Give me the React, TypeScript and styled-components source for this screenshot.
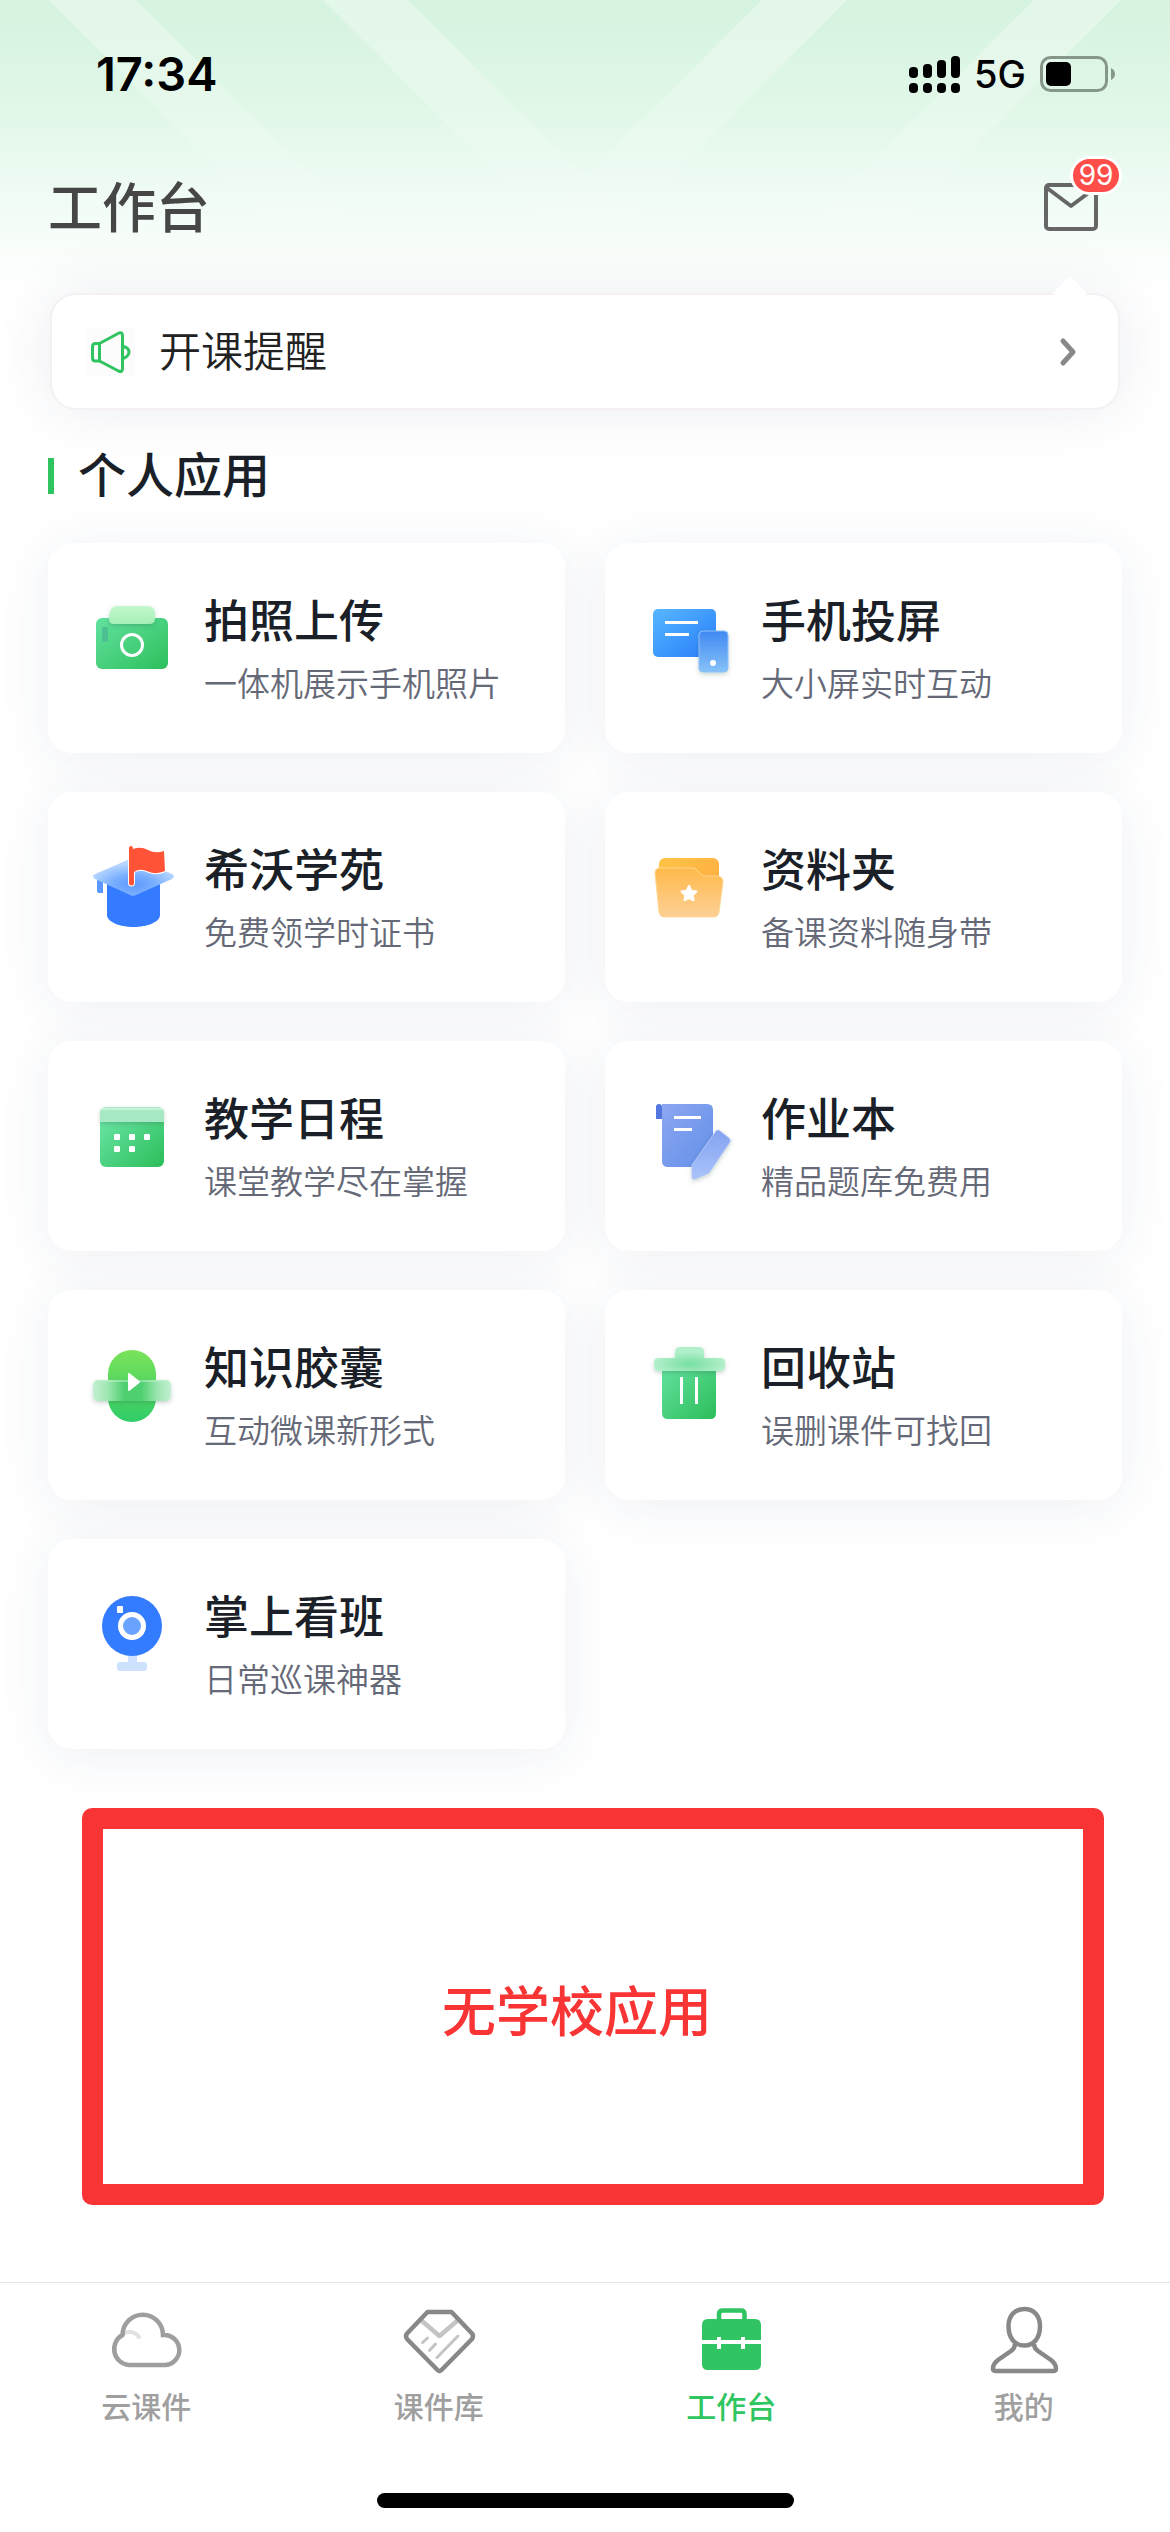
import React from "react";
import styled, { createGlobalStyle } from "styled-components";

const GlobalStyle = createGlobalStyle`
  *, *::before, *::after { box-sizing: border-box; }
  body {
    margin: 0;
    background: #fff;
    font-family: Inter, "Noto Sans CJK SC", sans-serif;
  }
  button {
    font: inherit;
    color: inherit;
    border: 0;
    padding: 0;
    background: none;
    text-align: left;
    cursor: pointer;
  }
  a { color: inherit; text-decoration: none; }
  h1, h2, p { margin: 0; }
  svg { display: block; overflow: visible; flex: none; }
`;

const Screen = styled.div`
  position: relative;
  display: flex;
  flex-direction: column;
  min-height: 100vh;
  background: linear-gradient(#d5f3df 0, #e1f7e8 110px, #f2fcf6 210px, #fff 290px);
`;

const Rays = styled.svg`
  position: absolute;
  top: 0;
  left: 0;
  width: 100%;
  height: 290px;
`;

const StatusBar = styled.div`
  position: relative;
  display: flex;
  align-items: center;
  justify-content: space-between;
  height: 148px;
  padding: 0 54px 0 96px;
  color: #000;
`;

const Clock = styled.span`
  font-size: 47px;
  line-height: 60px;
  font-weight: 600;
`;

const StatusIcons = styled.div`
  display: flex;
  align-items: center;
  gap: 14px;
`;

const Network = styled.span`
  font-size: 38px;
  line-height: 48px;
  font-weight: 500;
`;

const Header = styled.header`
  position: relative;
  display: flex;
  align-items: center;
  justify-content: space-between;
  height: 118px;
  padding: 0 72px 0 48px;
`;

const PageTitle = styled.h1`
  padding-top: 4px;
  font-size: 54px;
  line-height: 72px;
  font-weight: 500;
  color: #464646;
`;

const MailButton = styled.button`
  position: relative;
`;

const Badge = styled.span`
  position: absolute;
  top: -27px;
  left: 26px;
  display: flex;
  align-items: center;
  justify-content: center;
  width: 52px;
  height: 39px;
  border: 3px solid #fff;
  border-radius: 20px;
  background: #ff4d49;
  color: #fff;
  font-size: 28px;
  line-height: 33px;
`;

const Main = styled.main`
  position: relative;
  flex: 1;
  display: flex;
  flex-direction: column;
  padding: 27px 48px 60px;
`;

const Notice = styled.button`
  position: relative;
  display: flex;
  align-items: center;
  gap: 24px;
  margin: 0 2px;
  height: 117px;
  padding: 0 42px 0 35px;
  border: 2px solid #f5f1f2;
  border-radius: 26px;
  background: #fff;
  box-shadow: 0 0 60px rgba(40, 60, 110, 0.09);

  &::before {
    content: "";
    position: absolute;
    top: -14px;
    right: 36px;
    width: 24px;
    height: 24px;
    background: #fff;
    transform: rotate(45deg);
  }
`;

const NoticeText = styled.span`
  flex: 1;
  font-size: 42px;
  line-height: 60px;
  font-weight: 350;
  color: #222;
`;

const SectionHeading = styled.h2`
  display: flex;
  align-items: center;
  gap: 24px;
  margin: 36px 0 37px;
  font-size: 48px;
  line-height: 60px;
  font-weight: 500;
  color: #1a1f28;

  &::before {
    content: "";
    width: 6px;
    height: 36px;
    background: #30c460;
  }
`;

const AppGrid = styled.div`
  display: grid;
  grid-template-columns: 1fr 1fr;
  gap: 39px 40px;
`;

const AppCard = styled.button`
  display: flex;
  align-items: flex-start;
  gap: 30px;
  height: 210px;
  padding: 51px 42px;
  border-radius: 24px;
  background: #fff;
  box-shadow: 0 6px 54px rgba(40, 60, 110, 0.08);
`;

const AppText = styled.span`
  display: flex;
  flex-direction: column;
  gap: 12px;
  white-space: nowrap;
`;

const AppName = styled.span`
  font-size: 45px;
  line-height: 56px;
  font-weight: 500;
  color: #1a1f28;
`;

const AppNote = styled.span`
  font-size: 33px;
  line-height: 44px;
  font-weight: 350;
  color: #656977;
`;

const EmptyNote = styled.p`
  display: flex;
  align-items: center;
  justify-content: center;
  min-height: 397px;
  margin: 59px 18px 0 34px;
  padding: 12px 32px 0 0;
  border: 21px solid #f93434;
  border-radius: 10px;
  font-size: 54px;
  line-height: 72px;
  font-weight: 500;
  color: #f93434;
`;

const TabBar = styled.nav`
  position: relative;
  border-top: 1px solid #e4e4e4;
  background: #fff;
`;

const Tabs = styled.div`
  display: flex;
  padding-top: 21px;
`;

const Tab = styled.a<{ $active?: boolean }>`
  flex: 1;
  display: flex;
  flex-direction: column;
  align-items: center;
  gap: 9px;
  font-size: 30px;
  line-height: 44px;
  font-weight: 500;
  color: ${(p) => (p.$active ? "#2fc560" : "#9f9f9f")};
`;

const HomeIndicator = styled.div`
  width: 417px;
  height: 15px;
  margin: 64px auto 24px;
  border-radius: 8px;
  background: #000;
`;

const HeaderRays = () => (
  <Rays viewBox="0 0 1170 290" preserveAspectRatio="xMidYMin slice" aria-hidden="true">
    <defs>
      <linearGradient id="ray" gradientUnits="userSpaceOnUse" x1="0" y1="0" x2="0" y2="240">
        <stop offset="0" stopColor="#fff" stopOpacity="0.34" />
        <stop offset="1" stopColor="#fff" stopOpacity="0" />
      </linearGradient>
    </defs>
    <g fill="url(#ray)">
      <path d="M49 0H136L406 270H319Z" />
      <path d="M323 0H408L678 270H593Z" />
      <path d="M847 0H762L492 270H577Z" />
      <path d="M1121 0H1034L764 270H851Z" />
    </g>
  </Rays>
);

const Signal = () => (
  <svg width="51" height="37" viewBox="0 0 51 37" role="img" aria-label="信号">
    {[11, 8, 4, 0].map((top, i) => (
      <g key={top}>
        <rect x={i * 14} y={top} width="9" height={22 - top} rx="4" />
        <rect x={i * 14} y="27" width="9" height="10" rx="4" />
      </g>
    ))}
  </svg>
);

const Battery = () => (
  <svg width="76" height="36" viewBox="0 0 76 36" role="img" aria-label="电量">
    <rect x="1.5" y="1.5" width="65" height="33" rx="9" fill="none" stroke="#87968b" strokeWidth="3" />
    <rect x="6" y="6" width="25" height="24" rx="5" />
    <path d="M71 12Q75 14 75 18T71 24Z" fill="#87968b" />
  </svg>
);

const MailIcon = () => (
  <svg width="54" height="48" viewBox="0 0 54 48" fill="none" stroke="#666" strokeWidth="4" strokeLinejoin="round">
    <rect x="2" y="2" width="50" height="44" rx="3" />
    <path d="M3 5L27 23L51 5" />
  </svg>
);

const HornIcon = () => (
  <svg width="48" height="48" viewBox="0 0 48 48" fill="none" stroke="#30c460" strokeWidth="3" strokeLinejoin="round">
    <rect width="48" height="48" fill="#fcfcfc" stroke="none" />
    <path d="M12.500 15.500H8.500Q5.500 15.500 5.500 19V30Q5.500 33 8.500 33H12.500Z" />
    <path d="M12.500 15.500L31.500 5.200Q35.500 3.500 35.500 8V40.500Q35.500 44.500 31.500 43L12.500 33" />
    <path d="M36.500 18.500Q42 20 42 24T36.500 30.500" />
  </svg>
);

const ChevronIcon = () => (
  <svg width="16" height="28" viewBox="0 0 16 28" fill="none" stroke="#888" strokeWidth="5" strokeLinecap="round" strokeLinejoin="round">
    <path d="M3 3L13 14L3 25" />
  </svg>
);

const iconBox = { width: 84, height: 84, viewBox: "0 0 84 84", "aria-hidden": true } as const;

// Two-stop diagonal gradient shared by the app icons.
const Gradient = ({ id, from, to, vertical }: { id: string; from: string; to: string; vertical?: boolean }) => (
  <linearGradient id={id} x1="0" y1="0" x2={vertical ? 0 : 1} y2="1">
    <stop offset="0" stopColor={from} />
    <stop offset="1" stopColor={to} />
  </linearGradient>
);

const SoftShadow = ({ id }: { id: string }) => (
  <filter id={id} x="-30%" y="-30%" width="160%" height="170%">
    <feDropShadow dx="0" dy="2" stdDeviation="2" floodColor="#2a5a48" floodOpacity="0.25" />
  </filter>
);

const CameraIcon = () => (
  <svg {...iconBox}>
    <Gradient id="cam" from="#62e2a0" to="#2dbf5b" />
    <Gradient id="camTop" from="#c4f8ce" to="#a5efb6" vertical />
    <SoftShadow id="camShade" />
    <rect x="6" y="24" width="72" height="51" rx="6" fill="url(#cam)" />
    <path d="M27 12H57Q65 12 65 19V24Q65 30 59 30H24Q19 30 19 25Q19 12 27 12Z" fill="url(#camTop)" filter="url(#camShade)" />
    <rect x="12" y="33" width="6" height="15" rx="1" fill="#4dc093" />
    <circle cx="42" cy="51" r="10.500" fill="none" stroke="#fff" strokeWidth="3" />
  </svg>
);

const CastIcon = () => (
  <svg {...iconBox}>
    <Gradient id="scr" from="#57b7ff" to="#287cfa" />
    <Gradient id="phone" from="#4089f2" to="#86c1f7" vertical />
    <SoftShadow id="phoneShade" />
    <rect x="6" y="15" width="63" height="48" rx="5" fill="url(#scr)" />
    <path d="M18 27H51V30H18ZM18 39H42V42H18Z" fill="#fff" />
    <rect x="52" y="37" width="29" height="41" rx="4" fill="url(#phone)" stroke="#8cc0f8" filter="url(#phoneShade)" />
    <circle cx="66" cy="69" r="3" fill="#fff" />
  </svg>
);

const AcademyIcon = () => (
  <svg {...iconBox}>
    <radialGradient id="hat" cx="0.5" cy="0.7" r="0.55">
      <stop offset="0" stopColor="#5c98ff" />
      <stop offset="0.45" stopColor="#78aeff" />
      <stop offset="1" stopColor="#b7d6fe" />
    </radialGradient>
    <path d="M7 37H13V50H9Q7 50 7 48Z" fill="#5c96ff" />
    <path d="M17 36H70V72C70 79 57 84 43.500 84S17 79 17 72Z" fill="#347bff" />
    <path d="M40 16Q43 14 46 16L82 31Q86 33 82 36L46 52Q43 53.500 40 52L5 36Q1 33 5 31Z" fill="url(#hat)" />
    <path d="M39 5Q39 3 41 3T43 6Q51 3 58 7T74 8L75 28Q66 32 58 28.500T44 29V40Q44 42.500 41.500 42.500T39 40Z" fill="#fe5337" stroke="#fff" strokeWidth="2" paintOrder="stroke" />
  </svg>
);

const FolderIcon = () => (
  <svg {...iconBox}>
    <Gradient id="back" from="#ffc445" to="#ffa742" />
    <Gradient id="front" from="#ffb94a" to="#fdd096" vertical />
    <rect x="12" y="15" width="60" height="50" rx="6" fill="url(#back)" />
    <path d="M13 25H45Q48 25 50 27L55 32Q56 33 58 33H71Q76 34 76 39L72 69Q71 74 67 74H17Q13 74 12 69L8 30Q8 25 13 25Z" fill="url(#front)" stroke="#ffd793" strokeWidth="1" />
    <path d="M42 43L44.300 47.700L49.500 48.500L45.700 52.200L46.600 57.300L42 54.900L37.400 57.300L38.300 52.200L34.500 48.500L39.700 47.700Z" fill="#fff" stroke="#fff" strokeWidth="2" strokeLinejoin="round" />
  </svg>
);

const CalendarIcon = () => (
  <svg {...iconBox}>
    <Gradient id="cal" from="#6ee8ab" to="#2bbd59" />
    <SoftShadow id="calShade" />
    <rect x="10" y="18" width="64" height="57" rx="6" fill="url(#cal)" />
    <path d="M10 30V21Q10 15 16 15H68Q74 15 74 21V30Z" fill="#a8e9c5" filter="url(#calShade)" />
    <path d="M12 17H72" stroke="#c6f2d9" strokeWidth="2" />
    <g fill="#fff">
      {[[24, 42], [39, 42], [54, 42], [24, 54], [39, 54]].map(([x, y]) => (
        <rect key={`${x}-${y}`} x={x} y={y} width="6" height="6" rx="1" />
      ))}
    </g>
  </svg>
);

const NotebookIcon = () => (
  <svg {...iconBox}>
    <Gradient id="book" from="#8ea6f2" to="#6190e8" />
    <Gradient id="pen" from="#84a2f0" to="#a9c3fa" vertical />
    <SoftShadow id="penShade" />
    <path d="M15 12H60Q66 12 66 18V75H21Q15 75 15 69Z" fill="url(#book)" />
    <path d="M9 27V15Q9 12 12 12T15 15V27Z" fill="#5276de" />
    <path d="M27 24H54V27H27ZM27 36H45V39H27Z" fill="#fff" />
    <path d="M69 39Q71 37 73 39L82 46Q84 48 83 50L62 81L48 87Q45 88 45 85V73Z" fill="url(#pen)" stroke="#b2c6f8" filter="url(#penShade)" />
  </svg>
);

const CapsuleIcon = () => (
  <svg {...iconBox}>
    <Gradient id="pill" from="#7ae259" to="#2fcc68" vertical />
    <linearGradient id="band">
      <stop offset="0" stopColor="#c3efd1" />
      <stop offset="0.2" stopColor="#9be5ae" />
      <stop offset="0.4" stopColor="#4fd070" />
      <stop offset="0.62" stopColor="#4fd070" />
      <stop offset="0.82" stopColor="#9be5ae" />
      <stop offset="1" stopColor="#c3efd1" />
    </linearGradient>
    <SoftShadow id="bandShade" />
    <rect x="18" y="9" width="48" height="72" rx="24" fill="url(#pill)" />
    <rect x="3" y="39" width="78" height="21" rx="5" fill="url(#band)" filter="url(#bandShade)" />
    <path d="M7 40H77" stroke="#c4f3cf" strokeWidth="1" />
    <path d="M39 33L49 41L39 49Z" fill="#fff" stroke="#fff" strokeWidth="2" strokeLinejoin="round" />
  </svg>
);

const TrashIcon = () => (
  <svg {...iconBox}>
    <Gradient id="bin" from="#64e2a0" to="#2bbd59" />
    <radialGradient id="lid" cx="0.5" cy="0.7" r="0.5">
      <stop offset="0" stopColor="#76dfa0" />
      <stop offset="1" stopColor="#b2efcb" />
    </radialGradient>
    <SoftShadow id="lidShade" />
    <path d="M15 26H69V72Q69 78 63 78H21Q15 78 15 72Z" fill="url(#bin)" />
    <path d="M33 36H36V63H33ZM48 36H51V63H48Z" fill="#fff" />
    <path d="M28 17V11Q28 6 34 6H52Q57 6 57 11V17H73Q78 17 78 21V25Q78 30 73 30H12Q7 30 7 25V21Q7 17 12 17Z" fill="url(#lid)" filter="url(#lidShade)" />
  </svg>
);

const WebcamIcon = () => (
  <svg {...iconBox}>
    <path d="M38 64H47V72H54Q57 72 57 75V78Q57 81 54 81H30Q27 81 27 78V75Q27 72 30 72H38Z" fill="#cce2ff" />
    <circle cx="42" cy="36" r="30" fill="#347cff" />
    <circle cx="42" cy="36" r="11.500" fill="#6aa2ff" stroke="#fff" strokeWidth="5" />
    <rect x="27" y="16" width="6" height="7" rx="1" fill="#fff" />
  </svg>
);

const tabBox = { width: 72, height: 72, viewBox: "0 0 72 72", fill: "none", "aria-hidden": true } as const;

const CloudTabIcon = () => (
  <svg {...tabBox} strokeWidth="4.500">
    <path d="M14 29Q24 26 29 33" stroke="#e2e2e2" strokeWidth="4" strokeLinecap="round" />
    <path d="M12.500 31A20.200 20.200 0 0 1 53 31A15 15 0 0 1 55.500 61H19A16 16 0 0 1 12.500 31Z" stroke="#9e9e9e" />
  </svg>
);

const GemTabIcon = () => (
  <svg {...tabBox} strokeLinecap="round" strokeLinejoin="round">
    <path d="M19 17L36.500 32L54 17" stroke="#c4c4c4" strokeWidth="4.500" />
    <path d="M24.500 34L19.500 38.500M32.500 40L26.500 46.500M55 32L34 53.500" stroke="#c4c4c4" strokeWidth="3" />
    <path d="M24.500 8H48.500L69 29.500Q71 32 69 35L38.500 66Q36.500 68 34.500 66L4 35Q2 32 4 29.500Z" stroke="#888" strokeWidth="4.500" />
  </svg>
);

const BriefcaseTabIcon = () => (
  <svg {...tabBox}>
    <path d="M24 17V10Q24 6.500 28 6.500H46Q49.500 6.500 49.500 10V17" stroke="#30c463" strokeWidth="4.500" />
    <path d="M13 15H60Q66 15 66 21V36H50V33H46V36H26V33H22V36H7V21Q7 15 13 15Z" fill="#30c463" />
    <path d="M7 40H22V45H26V40H46V45H50V40H66V60Q66 66 60 66H13Q7 66 7 60Z" fill="#30c463" />
  </svg>
);

const PersonTabIcon = () => (
  <svg {...tabBox} stroke="#888" strokeWidth="4.500">
    <path d="M36.300 5C46 5 52 12 52 22C52 34 46 41.500 36.300 41.500S20.500 34 20.500 22C20.500 12 26.500 5 36.300 5Z" />
    <path d="M27 40Q27 44 23 47L10 56Q5 60 5 64.500Q5 67 8 67H65Q68 67 68 64.500Q68 60 63 56L50 47Q46 44 46 40" />
  </svg>
);

const apps = [
  { name: "拍照上传", note: "一体机展示手机照片", Icon: CameraIcon },
  { name: "手机投屏", note: "大小屏实时互动", Icon: CastIcon },
  { name: "希沃学苑", note: "免费领学时证书", Icon: AcademyIcon },
  { name: "资料夹", note: "备课资料随身带", Icon: FolderIcon },
  { name: "教学日程", note: "课堂教学尽在掌握", Icon: CalendarIcon },
  { name: "作业本", note: "精品题库免费用", Icon: NotebookIcon },
  { name: "知识胶囊", note: "互动微课新形式", Icon: CapsuleIcon },
  { name: "回收站", note: "误删课件可找回", Icon: TrashIcon },
  { name: "掌上看班", note: "日常巡课神器", Icon: WebcamIcon },
];

const tabs = [
  { label: "云课件", Icon: CloudTabIcon },
  { label: "课件库", Icon: GemTabIcon },
  { label: "工作台", Icon: BriefcaseTabIcon, active: true },
  { label: "我的", Icon: PersonTabIcon },
];

export default function App() {
  return (
    <>
      <GlobalStyle />
      <Screen>
        <HeaderRays />
        <StatusBar>
          <Clock>17:34</Clock>
          <StatusIcons>
            <Signal />
            <Network>5G</Network>
            <Battery />
          </StatusIcons>
        </StatusBar>
        <Header>
          <PageTitle>工作台</PageTitle>
          <MailButton aria-label="消息">
            <MailIcon />
            <Badge>99</Badge>
          </MailButton>
        </Header>
        <Main>
          <Notice>
            <HornIcon />
            <NoticeText>开课提醒</NoticeText>
            <ChevronIcon />
          </Notice>
          <SectionHeading>个人应用</SectionHeading>
          <AppGrid>
            {apps.map(({ name, note, Icon }) => (
              <AppCard key={name}>
                <Icon />
                <AppText>
                  <AppName>{name}</AppName>
                  <AppNote>{note}</AppNote>
                </AppText>
              </AppCard>
            ))}
          </AppGrid>
          <EmptyNote>无学校应用</EmptyNote>
        </Main>
        <TabBar>
          <Tabs>
            {tabs.map(({ label, Icon, active }) => (
              <Tab key={label} href="#" $active={active} aria-current={active ? "page" : undefined}>
                <Icon />
                {label}
              </Tab>
            ))}
          </Tabs>
          <HomeIndicator />
        </TabBar>
      </Screen>
    </>
  );
}
